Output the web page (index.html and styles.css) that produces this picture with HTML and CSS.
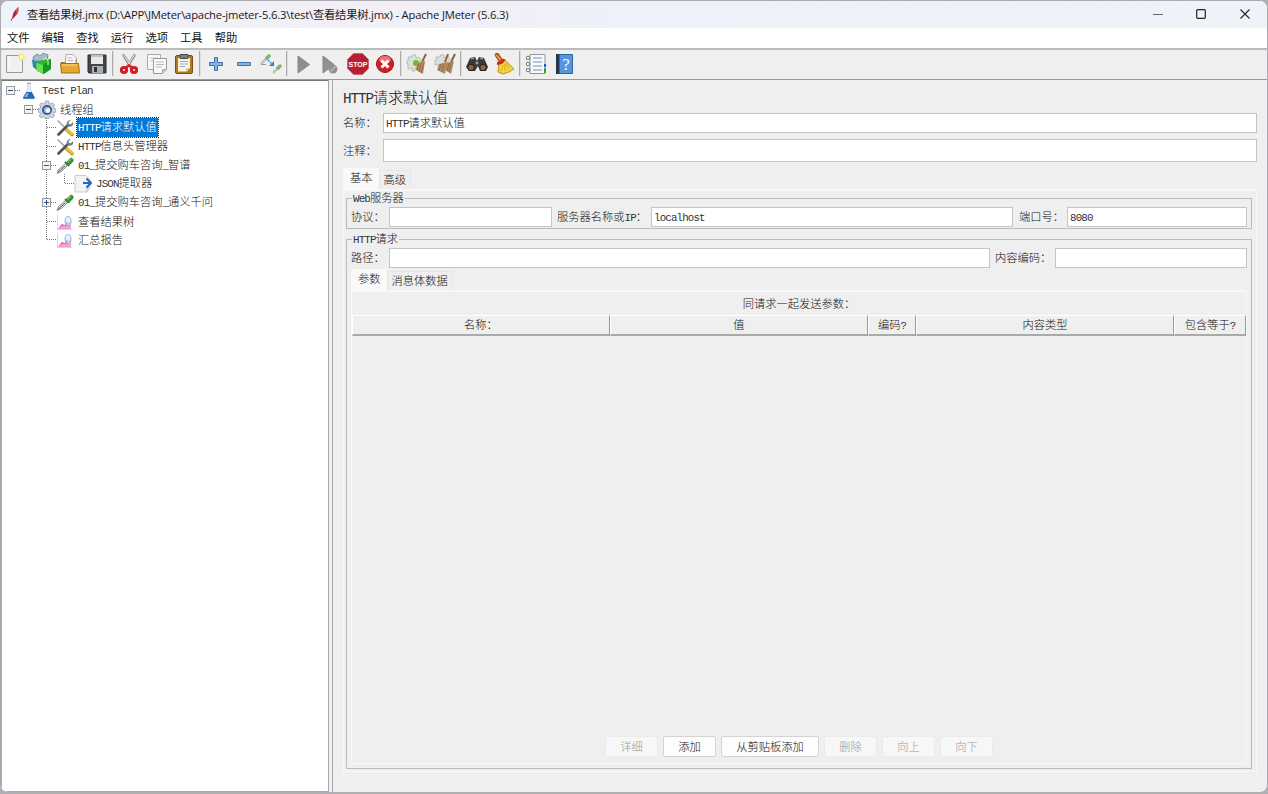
FILE: index.html
```html
<!DOCTYPE html>
<html lang="zh-CN">
<head>
    <meta charset="UTF-8">
    <meta name="viewport" content="width=device-width, initial-scale=1.0">
    <title>Apache JMeter (5.6.3)</title>
    <link rel="stylesheet" href="styles.css">
</head>
<body>
    <!-- shared tree symbols -->
    <svg class="defs">
        <symbol id="t-vert" viewBox="0 0 18 19"><path class="dots" d="M8.5 0v19"/></symbol>
        <symbol id="t-tee" viewBox="0 0 18 19"><path class="dots" d="M8.5 0v19M9 9.5h9"/></symbol>
        <symbol id="t-ell" viewBox="0 0 18 19"><path class="dots" d="M8.5 0v10M9 9.5h9"/></symbol>
        <symbol id="t-minus" viewBox="0 0 18 19"><path class="dots" d="M13 9.5h5"/><rect x="4.500" y="5.500" width="8" height="8" fill="#f4f4f4" stroke="#999"/><path d="M6 9.500h5" stroke="#2c4f96"/></symbol>
        <symbol id="t-plus" viewBox="0 0 18 19"><path class="dots" d="M13 9.5h5"/><rect x="4.500" y="5.500" width="8" height="8" fill="#f4f4f4" stroke="#999"/><path d="M6 9.500h5M8.500 7v5" stroke="#2c4f96"/></symbol>
        <symbol id="i-flask" viewBox="0 0 18 19"><path d="M7.500 2h3v6l4 9q0 1-1 1h-9q-1 0-1-1l4-9z" fill="#e6eef6" stroke="#b9c7d4" stroke-width=".6"/><path d="M6.300 11h5.400l3.200 5.800q0 1-1 1H4q-1 0-1-1z" fill="#2468b4"/><path d="M6.500 12h2l-1 4H4.500z" fill="#7db4ea"/><path d="M7 2.300h4" stroke="#8ba3b8"/></symbol>
        <symbol id="i-gear" viewBox="0 0 18 19"><path d="M7.500 1h3l.5 2.300 1.500.700 2.100-1.200 2 2.100-1.200 2 .700 1.500 2 .500v3l-2.100.600-.700 1.500 1.200 2-2.100 2-2-1.200-1.500.700-.5 1.500h-3l-.500-1.500-1.600-.700-2 1.200-2-2.100 1.100-2-.600-1.500L0 11.900v-3l2.100-.5.700-1.500-1.200-2 2-2.100 2 1.200 1.400-.700z" fill="#d2d5d9" stroke="#8b9096" stroke-width=".7"/><circle cx="9" cy="10" r="5" fill="#34558d"/><circle cx="9" cy="10" r="3.300" fill="#93afd8"/><circle cx="10" cy="10.500" r="2.300" fill="#f7faff"/></symbol>
        <symbol id="i-tools" viewBox="0 0 18 19"><path d="M1.500 2.500l9 8.500" stroke="#a5a5a5" stroke-width="1.600"/><path d="M10 11l6 5.500" stroke="#c89400" stroke-width="3.600" stroke-linecap="round"/><path d="M10 10.500l6 5.500" stroke="#f3c530" stroke-width="2" stroke-linecap="round"/><path d="M2.500 16.500L12 7" stroke="#50555a" stroke-width="2.800" stroke-linecap="round"/><path d="M15 2.200l-2.500 1.500.3 2 2 .5 2.200-2.200q.8 3.500-2 4.500-3 .8-4.200-1.800-.6-3 1.700-4.300 1-.6 2.500-.2" fill="#777c80"/></symbol>
        <symbol id="i-dropper" viewBox="0 0 18 19"><path d="M1 17.500l1.500-4 7-6 2 2-6 6z" fill="#dce1dc" stroke="#777" stroke-width=".8"/><path d="M2 16.500l7-6.500" stroke="#555" stroke-width="1"/><path d="M9 6l4 4" stroke="#5f665a" stroke-width="1.800"/><path d="M12 7.500l3.200-3.200" stroke="#3c8a38" stroke-width="4.600" stroke-linecap="round"/><path d="M12 6l2.500-2.500" stroke="#77c769" stroke-width="1.500" stroke-linecap="round"/></symbol>
        <symbol id="i-extract" viewBox="0 0 18 19"><path d="M1 1.500h11l4 4v8L13 18H1z" fill="#f2f2f2" stroke="#c0c0c0" stroke-width=".8"/><path d="M16 14h-3v4" fill="#ddd" stroke="#b6b6b6" stroke-width=".6"/><path d="M9 9h7M12.500 4.500L17 9l-4.500 4.500" fill="none" stroke="#1b69c1" stroke-width="2"/></symbol>
        <symbol id="i-chart" viewBox="0 0 18 19"><path d="M1.500 3v14.500H16" fill="none" stroke="#d3d5d9"/><path d="M2 16.800l4-5 3 1.500L15 9v7.800z" fill="#e06ab4"/><path d="M2 16.800l5-3 4 .5 4-3v5.500z" fill="#f0a5d0"/><ellipse cx="12" cy="9" rx="3" ry="4.500" fill="#dceafb" fill-opacity=".7" stroke="#9bb4df"/><path d="M8.500 14l3-4" stroke="#8398c5"/></symbol>
    </svg>

    <div class="window">
        <header class="titlebar">
            <svg class="feather" viewBox="0 0 14 18"><path d="M3 16L5 11Q5 6 11 1Q13 6 7 12L5 13z" fill="#c92b39"/><path d="M8 4Q11 2 11 1Q12 4 9 8z" fill="#e96f3b"/><path d="M3 16L10 4" stroke="#6b2453" stroke-width=".7"/></svg>
            <span class="caption">查看结果树.jmx (D:\APP\JMeter\apache-jmeter-5.6.3\test\查看结果树.jmx) - Apache JMeter (5.6.3)</span>
            <svg class="controls" viewBox="0 0 100 12"><path d="M0 6.500h10" stroke="#666"/><rect x="43.700" y="1.700" width="8.600" height="8.600" rx="1" fill="none" stroke="#222" stroke-width="1.200"/><path d="M87.500 1.500l9 9M96.500 1.500l-9 9" stroke="#222" stroke-width="1.100"/></svg>
        </header>

        <nav class="menubar">
            <span>文件</span><span>编辑</span><span>查找</span><span>运行</span><span>选项</span><span>工具</span><span>帮助</span>
        </nav>

        <div class="toolbar">
            <svg viewBox="0 0 22 22"><path d="M2.500 2.500h16v17h-16z" fill="#f0f0f0" stroke="#999"/><path d="M5 4v13" stroke="#fff"/><circle cx="17.500" cy="4" r="3.500" fill="#f7e98a"/><circle cx="17.500" cy="4" r="1.700" fill="#fffbd8"/></svg>
            <svg viewBox="0 0 22 22"><path d="M1 7l5-2 4 3v8l-4 1-4-3z" fill="#2384b7"/><path d="M2 4l4-3 3 2 3-3 5 2-1 6H3z" fill="#a5bec5" stroke="#6798a8"/><path d="M5 10l6-3 9-1v10l-7 5-7-3z" fill="#2fb62e"/><path d="M5 10l7 2v9l-6-3z" fill="#69df52"/><path d="M12 12l8-6v10l-8 5z" fill="#139b20"/><path d="M12 7q4-4 5 1v4" fill="none" stroke="#dff5d7"/></svg>
            <svg viewBox="0 0 22 22"><path d="M2 9h4V6h12v13H2z" fill="#ad7210"/><path d="M7 1.500h7l3 3V14H6z" fill="#fafafa" stroke="#aaa"/><path d="M8.500 5h5M8.500 7.500h6" stroke="#b9b9b9"/><path d="M1.500 10.500h18l1 9.500H2.500z" fill="#e2a834" stroke="#a96e10"/><path d="M3 12h15" stroke="#ffd883"/></svg>
            <svg viewBox="0 0 22 22"><path d="M2 2h18v18H3l-1-1z" fill="#40464b" stroke="#292d31"/><path d="M5 2h12v9H5z" fill="#e5e9ec"/><path d="M5 2h12v2H5z" fill="#b9c0c6"/><path d="M6 13h11v7H6z" fill="#a9b0b5"/><path d="M8 14h3v5H8z" fill="#2d3438"/></svg>
            <i class="sep"></i>
            <svg viewBox="0 0 22 22"><path d="M5 1.500l8.500 13M17 1.500l-8.500 13" stroke="#999" stroke-width="3"/><path d="M5.500 2l8.500 12M16.500 2L8 14" stroke="#e7e7e7" stroke-width="1"/><ellipse cx="6" cy="17" rx="2.600" ry="2.600" fill="#eee" stroke="#d51b25" stroke-width="3"/><ellipse cx="16" cy="17" rx="2.600" ry="2.600" fill="#eee" stroke="#d51b25" stroke-width="3"/><path d="M8 15l3-3 3 3" fill="none" stroke="#d51b25" stroke-width="2.200"/></svg>
            <svg viewBox="0 0 22 22"><path d="M1.500 1.500h13v15h-13z" fill="#f6f6f6" stroke="#aaa"/><path d="M4 5h8M4 8h8" stroke="#ccc"/><path d="M7.500 5.500h13v11l-4 4h-9z" fill="#f8f8f8" stroke="#999"/><path d="M10 9h8M10 11.500h8M10 14h6" stroke="#bbb"/><path d="M20.500 16.500h-4v4" fill="#ccc" stroke="#aaa"/></svg>
            <svg viewBox="0 0 22 22"><rect x="2.500" y="2.500" width="17" height="18" rx="1.500" fill="#b77819" stroke="#76500e"/><path d="M5 5h12v10l-3.500 3.500H5z" fill="#f4f4ef"/><path d="M7 8.500h8M7 11h8M7 13.500h5" stroke="#aaa"/><path d="M17 15h-4v4" fill="#c9c9c2"/><path d="M7 1.500h8v4H7z" fill="#797f81" stroke="#4c504f"/></svg>
            <i class="sep"></i>
            <svg viewBox="0 0 22 22"><path d="M9.500 4.500h3v5h5v3h-5v5h-3v-5h-5v-3h5z" fill="#83b4e4" stroke="#3c74b3"/></svg>
            <svg viewBox="0 0 22 22"><path d="M4.500 9.500h13v3h-13z" fill="#83b4e4" stroke="#3c74b3"/></svg>
            <svg viewBox="0 0 22 22"><path d="M1 11l6-6M13 20l6-6" stroke="#bdc6bc" stroke-width="2.500"/><path d="M1 11.500h5" stroke="#999"/><path d="M7 5l2-2M18 15l2-2" stroke="#78b86a" stroke-width="3.500" stroke-linecap="round"/><path d="M8 7l5 5" stroke="#3289e1" stroke-width="1.400" stroke-dasharray="2 1"/><path d="M14 8v5H9z" fill="#2483e4"/></svg>
            <i class="sep"></i>
            <svg viewBox="0 0 22 22"><path d="M6 3l11.500 8.500L6 20z" fill="#8c8f8c" stroke="#858585"/></svg>
            <svg viewBox="0 0 22 22"><path d="M4 3l11 8.500L4 20z" fill="#8f928f" stroke="#858585"/><circle cx="14" cy="16" r="4.500" fill="#929292"/><path d="M11 19l6-6" stroke="#b7b7b7" stroke-width="1.400"/></svg>
            <svg viewBox="0 0 22 22"><path d="M6.500.5h9l6 6v9l-6 6h-9l-6-6v-9z" fill="#b91f32" stroke="#cf6873"/><text class="stop" x="11" y="14">STOP</text></svg>
            <svg viewBox="0 0 22 22"><circle cx="11" cy="11" r="8.500" fill="#d51e23" stroke="#9f161c"/><ellipse cx="11" cy="6.500" rx="6" ry="3.500" fill="#ee7373"/><path d="M7.500 7.500l7 7M14.500 7.500l-7 7" stroke="#fff" stroke-width="3"/></svg>
            <i class="sep"></i>
            <svg viewBox="0 0 22 22"><path d="M6 2h4v3l3-1 2 3-3 3 3 2-2 4-4-1v3H6v-3l-4 1v-5H1V7h2L2 4h4z" fill="#dce0dc" stroke="#b9beba"/><circle cx="10" cy="10" r="3" fill="#6abf29"/><path d="M20 1l-4 8" stroke="#8e633f" stroke-width="2"/><path d="M11 10l8-2-2 13-7-4z" fill="#b28a60"/><path d="M13 11l-2 6M15 10l-2 9M18 10l-3 10" stroke="#8b6544" stroke-width=".8"/></svg>
            <svg viewBox="0 0 22 22"><path d="M6 2h4v3l4-2 2 3-3 4v6H5v-4H1V7h2L2 4h4z" fill="#dce0dc" stroke="#b9beba"/><path d="M14 1l-3 8M21 1l-4 8" stroke="#8e633f" stroke-width="2"/><path d="M5 11l8-2-2 12-8-4zM12 10l8-2-3 13-6-4z" fill="#b28a60"/><path d="M7 11l-2 7M10 11l-2 8M15 10l-2 8M17 10l-2 9" stroke="#8b6544" stroke-width=".8"/></svg>
            <i class="sep"></i>
            <svg viewBox="0 0 22 22"><path d="M4 5l5-1 2 4 2-4 5 1 4 9-2 4h-6l-2-5-3 5H3l-3-4z" fill="#333b3f"/><path d="M5 6l3-1M14 5l3 1" stroke="#8b9498" stroke-width="1.500"/><circle cx="5" cy="14.500" r="3.200" fill="#a35b31" stroke="#222"/><circle cx="17" cy="14.500" r="3.200" fill="#a35b31" stroke="#222"/><circle cx="11" cy="10" r="1.500" fill="#99a1a4"/></svg>
            <svg viewBox="0 0 22 22"><path d="M4 2l4 6" stroke="#a65418" stroke-width="4.500" stroke-linecap="round"/><path d="M3.500 2l4 5" stroke="#dda34b" stroke-width="2"/><path d="M6 10l6-3 9 9q-4 3-11 5l-5-2z" fill="#f5d53d" stroke="#c49111"/><path d="M8 18l2-6M12 18l0-7M16 16l-3-6" stroke="#c99f1c" stroke-width=".8"/><path d="M4 10q5 1 7-4" fill="none" stroke="#d12720" stroke-width="3"/></svg>
            <i class="sep"></i>
            <svg viewBox="0 0 22 22"><path d="M5 1.500h15v19H5z" fill="#f6f8fa" stroke="#92979c"/><path d="M8 5h9M8 9h9M8 13h9M8 17h9" stroke="#6f95cb"/><circle cx="3" cy="5" r="1.800" fill="none" stroke="#777"/><circle cx="3" cy="11" r="1.800" fill="none" stroke="#777"/><circle cx="3" cy="17" r="1.800" fill="none" stroke="#777"/><path d="M20 11v3" stroke="#2358e4" stroke-width="2"/><path d="M20 15v5" stroke="#33a333" stroke-width="2"/></svg>
            <svg viewBox="0 0 22 22"><path d="M3.500 1.500h16v19h-16z" fill="#5596de" stroke="#2d66a8"/><path d="M3 1h3.500v20H3z" fill="#23364c"/><text class="help-mark" x="13" y="17">?</text></svg>
        </div>

        <main class="workspace">
            <aside class="tree">
                <div class="node"><svg><use href="#t-minus"/></svg><svg><use href="#i-flask"/></svg><span><b>Test Plan</b></span></div>
                <div class="node"><svg></svg><svg><use href="#t-minus"/></svg><svg><use href="#i-gear"/></svg><span>线程组</span></div>
                <div class="node"><svg></svg><svg></svg><svg><use href="#t-tee"/></svg><svg><use href="#i-tools"/></svg><span class="selected"><b>HTTP</b>请求默认值</span></div>
                <div class="node"><svg></svg><svg></svg><svg><use href="#t-tee"/></svg><svg><use href="#i-tools"/></svg><span><b>HTTP</b>信息头管理器</span></div>
                <div class="node"><svg></svg><svg></svg><svg><use href="#t-vert"/><use href="#t-minus"/></svg><svg><use href="#i-dropper"/></svg><span><b>01_</b>提交购车咨询<b>_</b>智谱</span></div>
                <div class="node"><svg></svg><svg></svg><svg><use href="#t-vert"/></svg><svg><use href="#t-ell"/></svg><svg><use href="#i-extract"/></svg><span><b>JSON</b>提取器</span></div>
                <div class="node"><svg></svg><svg></svg><svg><use href="#t-vert"/><use href="#t-plus"/></svg><svg><use href="#i-dropper"/></svg><span><b>01_</b>提交购车咨询<b>_</b>通义千问</span></div>
                <div class="node"><svg></svg><svg></svg><svg><use href="#t-tee"/></svg><svg><use href="#i-chart"/></svg><span>查看结果树</span></div>
                <div class="node"><svg></svg><svg></svg><svg><use href="#t-ell"/></svg><svg><use href="#i-chart"/></svg><span>汇总报告</span></div>
            </aside>

            <section class="editor">
                <h1><b>HTTP</b>请求默认值</h1>
                <div class="row name-row"><label>名称：</label><div class="field"><b>HTTP</b>请求默认值</div></div>
                <div class="row comment-row"><label>注释：</label><div class="field"></div></div>

                <div class="tabs"><span class="tab active">基本</span><span class="tab">高级</span></div>
                <div class="pane outer">
                    <fieldset class="server">
                        <legend><b>Web</b>服务器</legend>
                        <div class="row">
                            <label>协议：</label><div class="field protocol"></div>
                            <label class="host-label">服务器名称或<b>IP</b>：</label><div class="field grow"><b>localhost</b></div>
                            <label class="port-label">端口号：</label><div class="field port"><b>8080</b></div>
                        </div>
                    </fieldset>
                    <fieldset class="request">
                        <legend><b>HTTP</b>请求</legend>
                        <div class="row">
                            <label>路径：</label><div class="field grow"></div>
                            <label class="encoding-label">内容编码：</label><div class="field encoding"></div>
                        </div>
                        <div class="tabs inner-tabs"><span class="tab active">参数</span><span class="tab">消息体数据</span></div>
                        <div class="pane params">
                            <div class="params-title">同请求一起发送参数：</div>
                            <div class="thead">
                                <span>名称：</span><span>值</span><span>编码<b>?</b></span><span>内容类型</span><span>包含等于<b>?</b></span>
                            </div>
                            <div class="tbody"></div>
                            <div class="buttons">
                                <button disabled>详细</button>
                                <button>添加</button>
                                <button class="wide">从剪贴板添加</button>
                                <button disabled>删除</button>
                                <button disabled>向上</button>
                                <button disabled>向下</button>
                            </div>
                        </div>
                    </fieldset>
                </div>
            </section>
        </main>
    </div>
</body>
</html>
```

FILE: styles.css
```css
* {
    box-sizing: border-box;
}

body {
    margin: 0;
    height: 794px;
    overflow: hidden;
    background: #aeb0b3;
    font-family: SimSun, "Noto Sans CJK SC", sans-serif;
    font-size: 11.25px;
    font-weight: 300;
    color: #111;
}

/* half-width latin text */
b {
    font-family: "Liberation Mono", monospace;
    font-weight: normal;
    font-size: .96em;
    letter-spacing: -0.079em;
    color: #333;
}

.defs {
    position: absolute;
    width: 0;
    height: 0;
}

.dots {
    fill: none;
    stroke: #777;
    stroke-dasharray: 1 1;
}

.window {
    display: flex;
    flex-direction: column;
    height: 793px;
    border: 1px solid #aaacb0;
    border-radius: 8px;
    overflow: hidden;
    background: #efefef;
}

.titlebar {
    display: flex;
    align-items: center;
    height: 27px;
    padding: 0 14px 1px 7px;
    background: linear-gradient(90deg, #eef2fa, #f3eff6 30%, #eef1f9 48%, #edf3f8);
    font-family: "Open Sans", "Noto Sans CJK SC", sans-serif;
    font-weight: normal;
    letter-spacing: -0.2px;
    color: #191919;
}

.feather {
    width: 13px;
    height: 17px;
    margin-right: 6px;
}

.caption {
    flex: 1;
    padding-bottom: 1px;
    white-space: nowrap;
}

.controls {
    width: 100px;
    height: 12px;
}

.menubar {
    display: flex;
    gap: 12.1px;
    height: 20px;
    padding-left: 6px;
    background: #fff;
    font-family: "Noto Sans CJK SC", sans-serif;
    font-weight: normal;
    line-height: 19px;
    color: #111;
}

.toolbar {
    display: flex;
    align-items: center;
    height: 32px;
    padding: 0 0 2px .3px;
    border-top: 2px solid #bbb;
    border-bottom: 1px solid #999;
}

.toolbar svg {
    width: 22px;
    height: 22px;
    margin: 0 2.7px;
    flex: none;
}

.sep {
    width: 2px;
    height: 25px;
    margin: 0 1.4px;
    border-left: 1px solid #aaa;
    border-right: 1px solid #ddd;
}

.stop {
    font: bold 7px "Liberation Sans", sans-serif;
    fill: #fff;
    text-anchor: middle;
}

.help-mark {
    font: 16px "Liberation Serif", serif;
    fill: #fff;
    text-anchor: middle;
}

.workspace {
    display: flex;
    flex: 1;
    min-height: 0;
}

.tree {
    width: 328px;
    border: 1px solid #a5a7ab;
    border-top-color: #777;
    background: #fff;
}

.node {
    display: flex;
    align-items: center;
    height: 18.7px;
}

.node svg {
    width: 18px;
    height: 19px;
    flex: none;
}

.node span {
    margin-left: 3px;
    padding: 0 1px;
    line-height: 17px;
    white-space: nowrap;
}

.node .selected,
.selected b {
    background: #0078d7;
    color: #fff;
}

.node .selected {
    outline: 1px dotted #222;
}

.editor {
    display: flex;
    flex-direction: column;
    flex: 1;
    margin-left: 3px;
    padding: 7px 10px 20px 10px;
    border-left: 1px solid #aaa;
}

h1 {
    margin: 0 0 4px;
    font-size: 15px;
    font-weight: 300;
    line-height: 19px;
}

.row {
    display: flex;
    align-items: center;
}

.row label {
    flex: none;
    padding-bottom: 2px;
}

.field {
    height: 20px;
    padding-left: 2px;
    border: 1px solid #c3c4c7;
    background: #fff;
    line-height: 17px;
    white-space: nowrap;
}

.grow {
    flex: 1;
}

.name-row label,
.comment-row label {
    width: 40px;
}

.name-row .field,
.comment-row .field {
    flex: 1;
}

.comment-row {
    margin-top: 6px;
}

.comment-row .field {
    height: 23px;
}

.tabs {
    display: flex;
    align-items: flex-end;
    height: 21px;
    margin-top: 6px;
}

.tab {
    height: 19px;
    padding: 0 4px;
    border: 1px solid #e6e6e6;
    border-bottom: 0;
    line-height: 17px;
}

.tab.active {
    height: 21px;
    padding: 0 5px 0 6px;
    border-color: #f8f8f8;
    background: #f9f9f9;
}

.pane {
    display: flex;
    flex-direction: column;
    border: 1px solid #f8f8f8;
    border-top-width: 2px;
}

.outer {
    flex: 1;
    padding: 0 4px 2px 2px;
}

fieldset {
    min-width: 0;
    margin: 0;
    padding: 0 4px;
    border: 1px solid #b9bbbc;
}

legend {
    margin-left: 1px;
    padding: 0 1px;
    line-height: 12px;
}

.server {
    height: 38px;
}

.server .row {
    margin-top: 2px;
}

.server .row label,
.request .row label {
    width: 38px;
}

.protocol {
    width: 163px;
}

.server .row .host-label {
    width: 94px;
    margin-left: 5px;
}

.server .row .port-label {
    width: 48px;
    margin-left: 6px;
}

.port {
    width: 180px;
}

.request {
    display: flex;
    flex-direction: column;
    flex: 1;
    margin-top: 3px;
}

.request .row {
    margin-top: 2px;
}

.request .row .encoding-label {
    width: 60px;
    margin-left: 5px;
}

.encoding {
    width: 192px;
}

.inner-tabs {
    margin-top: 1px;
}

.params {
    flex: 1;
    margin-bottom: 4px;
}

.params-title {
    height: 23px;
    line-height: 23px;
    text-align: center;
}

.thead {
    display: grid;
    grid-template-columns: 258px 258px 48px 258px 1fr;
    height: 19px;
}

.thead span {
    border-top: 1px solid #fff;
    border-left: 1px solid #fff;
    border-right: 1px solid #999;
    border-bottom: 2px solid #aaa;
    line-height: 16px;
    text-align: center;
}

.tbody {
    flex: 1;
}

.buttons {
    display: flex;
    justify-content: center;
    gap: 5px;
    margin-bottom: 6px;
}

button {
    width: 53px;
    height: 21px;
    padding: 0 0 2px;
    border: 1px solid #d4d4d4;
    border-radius: 2px;
    background: #fdfdfd;
    font: inherit;
    color: #111;
}

button:disabled {
    border-color: #ebebeb;
    background: #f7f7f7;
    color: #999;
}

.wide {
    width: 98px;
}
```
